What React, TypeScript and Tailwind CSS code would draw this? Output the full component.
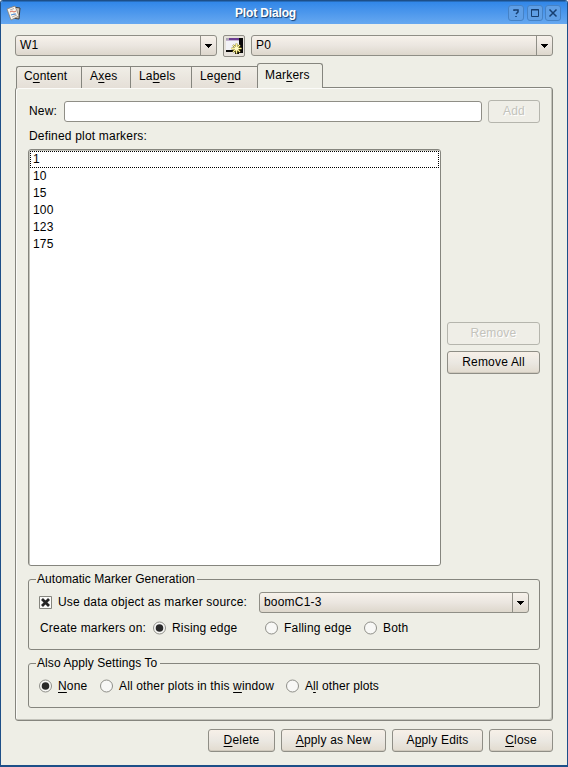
import type { ReactNode } from "react";

const U = ({ children }: { children: ReactNode }) => (
  <span className="underline decoration-1 underline-offset-2">{children}</span>
);

function Button({ children, className = "", disabled = false }: { children: ReactNode; className?: string; disabled?: boolean }) {
  return (
    <button
      disabled={disabled}
      className={`flex h-[23px] shrink-0 items-center justify-center rounded-[3px] border pb-px whitespace-nowrap ${
        disabled
          ? "border-[#b5b5ad] bg-[#efeee7] text-[#c3c3bc] [text-shadow:1px_1px_0_#fff]"
          : "border-[#8f8e86] bg-linear-to-b from-[#f7f0e8] via-[#ebe8e2] to-[#e2dbcf] shadow-[inset_0_-1px_0_#cfc9bd]"
      } ${className}`}
    >
      {children}
    </button>
  );
}

function Combo({ value, className }: { value: string; className: string }) {
  return (
    <div className={`flex h-[21px] shrink-0 rounded-[3px] border border-[#8f8e86] bg-linear-to-b from-[#f7f2eb] via-[#ebe6e0] to-[#ddd7cc] ${className}`}>
      <span className="flex-1 pl-1 leading-[18px]">{value}</span>
      <span className="flex w-4 items-center justify-center border-l border-[#8f8e86]">
        <svg width="7" height="4" shapeRendering="crispEdges">
          <path d="M0 0h7v1h-1v1h-1v1h-1v1h-1v-1h-1v-1h-1v-1h-1z" fill="#000" />
        </svg>
      </span>
    </div>
  );
}

function Radio({ checked = false }: { checked?: boolean }) {
  return (
    <svg width="14" height="14" className="-mt-px shrink-0">
      <circle cx="6.5" cy="7" r="6" fill="#f8f8f6" stroke="#8f8f89" />
      {checked && <circle cx="6.5" cy="7" r="3.8" fill="#292929" />}
    </svg>
  );
}

function DocumentsIcon() {
  return (
    <svg width="16" height="16" viewBox="0 0 16 16">
      <path d="M7 2l7 1-1 11-7-1z" fill="#cfc4b8" stroke="#423d39" />
      <path d="M1 4l8-3 4 10-8 4z" fill="#f7f5ef" stroke="#8c7f73" strokeWidth=".8" />
      <path d="M4 5l4-1.500M6 12l5-2" stroke="#b9aaa2" />
      <path d="M4 7l2-1 2 1 2-1" fill="none" stroke="#d46952" />
      <path d="M5 10l3-1 2 0" stroke="#4b8ee0" />
    </svg>
  );
}

function NewWindowIcon() {
  return (
    <svg width="18" height="18" viewBox="0 0 18 18" className="shrink-0">
      <g shapeRendering="crispEdges">
        <path d="M14 1h4v15h-4v1h-4v-2H1v-3h13z" fill="#080808" />
        <path d="M1 1h13v12H1z" fill="#f2f2f7" />
        <path d="M1 1h3v2H1z" fill="#aaa5b2" />
        <path d="M4 1h10v2H4z" fill="#6c3e91" />
        <path d="M1 3h13v1H1z" fill="#c4b5d0" />
      </g>
      <path d="M11.500 6.500v10M6.500 11.500h10M8 8l7 7m0-7l-7 7" stroke="#8f8634" strokeWidth="2" />
      <path d="M11.500 6.500v10M6.500 11.500h10M8 8l7 7m0-7l-7 7" stroke="#fff391" strokeWidth="1" />
      <circle cx="11.5" cy="11.5" r="2.2" fill="#fffbc8" />
    </svg>
  );
}

function TitleButton({ children, className = "" }: { children: ReactNode; className?: string }) {
  return (
    <div className={`flex size-4 items-center justify-center rounded-[3px] border border-[#4582c6] bg-[#5f9fe6] ${className}`}>
      <svg width="10" height="10" fill="none" stroke="#173f70" strokeWidth="1.5">{children}</svg>
    </div>
  );
}

function Tab({ children, className }: { children: ReactNode; className: string }) {
  return (
    <div className={`h-[22px] border-t border-l border-[#85857e] bg-linear-to-b from-[#f0eee7] to-[#e5dfd7] pt-0.5 pl-[7px] leading-[15px] whitespace-nowrap ${className}`}>
      {children}
    </div>
  );
}

export default function App() {
  return (
    <div className="flex h-[767px] w-[568px] flex-col overflow-hidden rounded-t-[3px] border border-b-2 border-[#1d4f88] bg-[#eeeee6] font-['Liberation_Sans',Arial,sans-serif] text-[12px] leading-[15px] tracking-[0.19px] text-black">
      <header className="flex h-[23px] shrink-0 items-center border-t border-[#266bb9] bg-linear-to-b from-[#3187e8] to-[#66a8f0] pr-[6px] pl-[5px]">
        <DocumentsIcon />
        <h1 className="flex-1 pt-px pl-px text-center text-[12px] font-bold tracking-[-0.15px] text-white [text-shadow:1px_1px_1px_#153e70]">Plot Dialog</h1>
        <div className="flex items-center">
          <TitleButton className="mr-[3px]"><path d="M3 3V2h4v2L5 6M5 8v1" /></TitleButton>
          <TitleButton className="mr-[2px]"><path d="M1.500 1.500h7v7h-7zM1 2h8" strokeWidth="1" /></TitleButton>
          <TitleButton><path d="M1.500 1.500l7 7m0-7l-7 7" /></TitleButton>
        </div>
      </header>
      <main className="flex flex-col pt-[11px] pl-[14px]">
        <div className="flex h-7 items-start">
          <Combo value="W1" className="w-[202px]" />
          <button className="mx-[6px] flex size-[22px] items-center justify-center rounded-[2px] border border-[#8f8e86] bg-[#e7e3dc]"><NewWindowIcon /></button>
          <Combo value="P0" className="w-[302px]" />
        </div>
        <div className="relative z-10 -mb-px flex h-[25px] items-end pl-px">
          <Tab className="w-[65px] rounded-tl-[3px]">C<U>o</U>ntent</Tab>
          <Tab className="w-[49px]"><span className="pl-px">A<U>x</U>es</span></Tab>
          <Tab className="w-[61px]"><span className="pl-px">La<U>b</U>els</span></Tab>
          <Tab className="w-[66px]"><span className="pl-px">Lege<U>n</U>d</span></Tab>
          <div className="h-[25px] w-[66px] rounded-t-[3px] border border-b-0 border-[#85857e] bg-[#eeeee6] pt-1 pl-[7px]">Mar<U>k</U>ers</div>
        </div>
        <section className="h-[634px] w-[538px] rounded-[3px] border border-[#85857e] pt-3 pl-3 shadow-[inset_-1px_-1px_0_#c3c3bb,inset_1px_1px_0_#fbfbf8]">
          <div className="flex h-[23px] items-center">
            <label className="w-9 pl-px">New:</label>
            <input className="h-[21px] w-[418px] rounded-[3px] border border-[#8f8e86] bg-white px-1" />
            <Button disabled className="ml-1.5 w-[52px]">Add</Button>
          </div>
          <p className="mt-[6px] mb-[5px] pl-px">Defined plot markers:</p>
          <div className="flex">
            <ul className="h-[417px] w-[413px] rounded-[3px] border border-[#85857e] bg-white p-px shadow-[inset_1px_1px_0_#c3c3bb]">
              {["1", "10", "15", "100", "123", "175"].map((n, i) => (
                <li key={n} className={`h-[17px] border pl-[2px] leading-[15px] ${i === 0 ? "border-dotted border-black" : "border-transparent"}`}>{n}</li>
              ))}
            </ul>
            <div className="ml-1.5 flex flex-col gap-1.5 pt-[173px]">
              <Button disabled className="w-[93px]">Remove</Button>
              <Button className="w-[93px]">Remove All</Button>
            </div>
          </div>
          <fieldset className="mt-[6px] h-[78px] w-[512px] rounded-[3px] border border-[#85857e] pl-[10px]">
            <legend className="-ml-[3px] h-[15px] w-[161px] pl-px whitespace-nowrap tracking-[0.05px]">Automatic Marker Generation</legend>
            <div className="mt-[5px] flex h-[21px] items-center">
              <svg width="13" height="13" className="shrink-0"><path d="M.5.5h12v12H.5z" fill="#fafaf8" stroke="#85857e" /><path d="M3 3l7 7m0-7l-7 7" stroke="#252525" strokeWidth="2.8" /></svg>
              <span className="w-[207px] shrink-0 pl-1.5">Use data object as marker source:</span>
              <Combo value="boomC1-3" className="w-[270px]" />
            </div>
            <div className="mt-2 flex h-[15px] items-center pl-px">
              <span className="w-[113px]">Create markers on:</span>
              <Radio checked /><span className="w-[98px] pl-[5px]">Rising edge</span>
              <Radio /><span className="w-[85px] pl-[5px]">Falling edge</span>
              <Radio /><span className="pl-[5px]">Both</span>
            </div>
          </fieldset>
          <fieldset className="mt-[6px] h-[52px] w-[512px] rounded-[3px] border border-[#85857e] pl-[10px]">
            <legend className="-ml-[3px] h-[15px] w-[124px] pl-px whitespace-nowrap tracking-[0.08px]">Also Apply Settings To</legend>
            <div className="mt-2 flex h-[15px] items-center">
              <Radio checked /><span className="w-[47px] pl-[5px]"><U>N</U>one</span>
              <Radio /><span className="w-[172px] pl-[5px] tracking-[0.14px]">All other plots in this <U>w</U>indow</span>
              <Radio /><span className="pl-[5px] tracking-[0.08px]">A<U>l</U>l other plots</span>
            </div>
          </fieldset>
        </section>
        <footer className="mt-2 flex w-[538px] justify-end gap-1.5">
          <Button className="w-[67px]"><U>D</U>elete</Button>
          <Button className="w-[105px]"><U>A</U>pply as New</Button>
          <Button className="w-[91px]">A<U>p</U>ply Edits</Button>
          <Button className="w-[64px]"><U>C</U>lose</Button>
        </footer>
      </main>
    </div>
  );
}
